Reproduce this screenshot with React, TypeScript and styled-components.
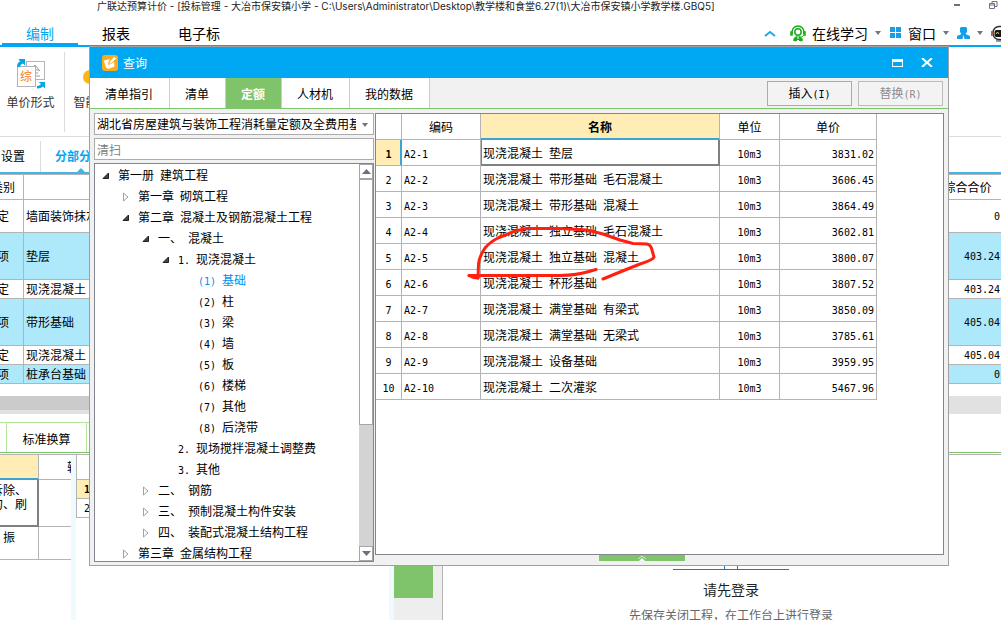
import React from "react";
import styled, { createGlobalStyle, css } from "styled-components";

const BLUE = "#00a8f3";
const GREEN = "#7fc36a";
const PALE_GREEN = "#b2e59c";
const LINE = "#b4b4b4";
const FRAME = "#83868f";
const YELLOW = "#ffedb5";
const SKY = "#aee8fb";
const ACCENT = "#3aa5d5";

const GlobalStyle = createGlobalStyle`
  *, *::before, *::after { box-sizing: border-box; }
  body {
    margin: 0;
    overflow: hidden;
    background: #fff;
    color: #000;
    font-family: "Noto Sans CJK SC", sans-serif;
    font-size: 12px;
    line-height: 14px;
  }
  button, input, select { font: inherit; color: inherit; margin: 0; }
  a { color: inherit; text-decoration: none; }
  svg { display: block; flex: none; }
`;

/* Half-width runs are set in a 6px monospaced face next to 12px Chinese. */
const Half = styled.span`
  font-family: "DejaVu Sans Mono", monospace;
  font-size: 10px;
  white-space: pre;
`;

const Mixed = ({ text }: { text: string }) => (
  <>
    {text
      .split(/([\x20-\x7e]+)/)
      .filter(Boolean)
      .map((run, i) => (/^[\x20-\x7e]/.test(run) ? <Half key={i}>{run}</Half> : <span key={i}>{run}</span>))}
  </>
);

/* ---------- main window ---------- */

const Shell = styled.div`
  position: relative;
  display: flex;
  flex-direction: column;
  height: 100vh;
  overflow: hidden;
  > * { flex-shrink: 0; }
`;

const TitleBar = styled.header`
  display: flex;
  justify-content: space-between;
  height: 16px;
  padding: 0 3px 0 97px;
  font-family: Inter, "Noto Sans CJK SC", sans-serif;
  font-size: 10px;
  line-height: 12px;
  color: #222;
  white-space: nowrap;
`;

const WindowButtons = styled.div`
  display: flex;
  gap: 28px;
`;

const IconButton = styled.button`
  display: flex;
  align-items: center;
  padding: 0;
  border: 0;
  background: none;
`;

const MenuBar = styled.nav`
  display: flex;
  justify-content: space-between;
  height: 31px;
  padding-left: 2px;
  border-bottom: 2px solid ${BLUE};
  font-size: 14px;
  line-height: 20px;
`;

const MenuGroup = styled.div`
  display: flex;
`;

const MenuItem = styled.a<{ $active?: boolean }>`
  padding: 7px 24px 0;
  ${(p) => p.$active && css`color: ${BLUE}; border-bottom: 2px solid ${BLUE};`}
`;

const MenuTools = styled.div`
  display: flex;
  align-items: center;
  gap: 7px;
  padding-top: 5px;
  overflow: hidden;
`;

const Tool = styled.button`
  display: flex;
  align-items: center;
  gap: 6px;
  padding: 0;
  border: 0;
  background: none;
  white-space: nowrap;
`;

const Ribbon = styled.div`
  display: flex;
  gap: 2px;
  height: 90px;
  padding-top: 5px;
  border-bottom: 1px solid #dcdcdc;
`;

const RibbonButton = styled.button`
  display: flex;
  flex-direction: column;
  align-items: center;
  gap: 6px;
  width: 65px;
  height: 80px;
  padding: 5px 3px 0 0;
  border: 0;
  border-right: 1px solid #dcdcdc;
  background: none;
  color: #333;
`;

const ViewTabs = styled.nav`
  display: flex;
  height: 37px;
  padding-top: 4px;
  border-bottom: 2px solid #41b5e4;
`;

const ViewTab = styled.a<{ $active?: boolean }>`
  position: relative;
  width: ${(p) => (p.$active ? 80 : 41)}px;
  padding: 8px 0 0 ${(p) => (p.$active ? 14 : 1)}px;
  white-space: nowrap;
  ${(p) =>
    p.$active
      ? css`
          color: ${BLUE};
          font-weight: 700;
          &::after {
            content: "";
            position: absolute;
            left: 36px;
            bottom: 0;
            border: 4px solid transparent;
            border-top: 0;
            border-bottom-color: #41b5e4;
          }
        `
      : css`border-right: 1px solid #dcdcdc;`}
`;

const BillTable = styled.table`
  width: calc(100% + 17px);
  margin-left: -17px;
  border-spacing: 0;
  border-top: 1px solid ${LINE};
  table-layout: fixed;
`;

const BillCell = styled.td<{ $align?: string }>`
  padding: 0 2px;
  border-right: 1px solid ${LINE};
  border-bottom: 1px solid ${LINE};
  text-align: ${(p) => p.$align ?? "left"};
  font-weight: 400;
  white-space: nowrap;
  &:last-child { border-right: 0; padding-right: 1px; }
`;

const BillRow = styled.tr<{ $h: number; $fill?: boolean }>`
  height: ${(p) => p.$h}px;
  background: ${(p) => (p.$fill ? SKY : "#fff")};
`;

const Scroller = styled.div`
  display: flex;
  height: 18px;
  margin-top: 12px;
  background: #e1e1e1;
  &::before {
    content: "";
    width: 60%;
    height: 14px;
    background: #cbcbcb;
  }
`;

const DetailTabs = styled.nav`
  display: flex;
  height: 31px;
  margin-top: 8px;
  border-bottom: 1px solid ${GREEN};
`;

const DetailTab = styled.a<{ $w: number }>`
  width: ${(p) => p.$w}px;
  padding-top: 9px;
  border-top: 1px solid ${PALE_GREEN};
  border-right: 1px solid ${PALE_GREEN};
  text-align: center;
`;

const Detail = styled.div`
  display: flex;
  flex: 1 1 0;
  min-height: 0;
  margin-top: 1px;
  border-top: 1px solid ${LINE};
`;

const Clip = styled.div<{ $w: number }>`
  width: ${(p) => p.$w}px;
  overflow: hidden;
`;

const Splitter = styled.div`
  width: 5px;
  background: #effaff;
`;

const NoteTable = styled.table`
  width: 240px;
  margin-left: -12px;
  border-spacing: 0;
  table-layout: fixed;
`;

const NoteRow = styled.tr<{ $h: number }>`
  height: ${(p) => p.$h}px;
`;

const NoteCell = styled.td<{ $head?: boolean; $picked?: boolean }>`
  padding: 3px 0 0 3px;
  border-right: 1px solid ${LINE};
  border-bottom: 1px solid ${LINE};
  vertical-align: top;
  text-align: left;
  font-weight: 400;
  &:last-child { padding: 0 0 0 28px; vertical-align: middle; }
  ${(p) => p.$head && css`background: ${YELLOW}; border-bottom: 2px solid ${ACCENT};`}
  ${(p) => p.$picked && css`border-right-color: #808080; border-bottom-color: #808080; box-shadow: inset -1px -1px 0 #808080;`}
`;

const IndexTable = styled.table`
  width: 100%;
  border-spacing: 0;
  border-left: 1px solid ${LINE};
`;

const IndexCell = styled.td<{ $picked?: boolean }>`
  height: 19px;
  padding: 0 0 0 7px;
  border-bottom: 1px solid ${LINE};
  background: ${(p) => (p.$picked ? YELLOW : "#fff")};
  font-weight: ${(p) => (p.$picked ? 700 : 400)};
`;

const SideRail = styled.div`
  width: 49px;
  border-right: 1px solid ${LINE};
  background: #eee;
`;

const RailTab = styled.button`
  display: block;
  width: 39px;
  height: 143px;
  border: 0;
  background: ${GREEN};
`;

const Login = styled.section`
  display: flex;
  flex: 1;
  flex-direction: column;
  align-items: center;
  padding: 96px 0 0 18px;
`;

const LoginTitle = styled.h2`
  margin: 8px 0;
  font-size: 14px;
  font-weight: 400;
  line-height: 20px;
  color: #222;
`;

const LoginHint = styled.p`
  margin: 0;
  line-height: 16px;
  color: #666;
  white-space: nowrap;
`;

/* ---------- query dialog ---------- */

const Dialog = styled.section`
  position: absolute;
  top: 46px;
  right: 52px;
  bottom: 54px;
  left: 89px;
  display: flex;
  flex-direction: column;
  border: 1px solid #a0a0a0;
  background: #f1f1f1;
`;

const DialogTitle = styled.header`
  display: flex;
  align-items: center;
  gap: 5px;
  height: 31px;
  padding: 0 15px 0 12px;
  background: ${BLUE};
  color: #fff;
`;

const DialogControls = styled.div`
  display: flex;
  gap: 18px;
  margin-left: auto;
`;

const DialogBar = styled.div`
  display: flex;
  align-items: center;
  justify-content: space-between;
  height: 31px;
  padding-right: 5px;
  border-bottom: 1px solid ${GREEN};
`;

const Tabs = styled.div`
  display: flex;
  height: 30px;
`;

const Tab = styled.button<{ $active?: boolean }>`
  padding: 2px 16px 0 15px;
  border: 0;
  border-right: 1px solid ${PALE_GREEN};
  background: ${(p) => (p.$active ? GREEN : "#fff")};
  color: ${(p) => (p.$active ? "#fff" : "#000")};
  font-weight: ${(p) => (p.$active ? 700 : 400)};
`;

const Actions = styled.div`
  display: flex;
  gap: 6px;
`;

const Action = styled.button`
  width: 85px;
  height: 25px;
  padding: 2px 0 0;
  border: 1px solid #ababab;
  background: #f3f3f3;
  &:disabled { border-color: #bcbcbc; color: #8c8c8c; }
`;

const DialogBody = styled.div`
  display: flex;
  flex: 1;
  gap: 1px;
  min-height: 0;
  padding: 4px 4px 3px;
`;

const LeftPane = styled.div`
  display: flex;
  flex-direction: column;
  gap: 3px;
  width: 280px;
`;

const SelectWrap = styled.div`
  position: relative;
  display: flex;
`;

const Select = styled.select`
  appearance: none;
  width: 100%;
  height: 22px;
  padding: 0 17px 0 2px;
  border: 1px solid #acacac;
  border-radius: 0;
  background: #fff;
`;

const SelectArrow = styled.span`
  position: absolute;
  right: 5px;
  top: 10px;
  pointer-events: none;
`;

const Search = styled.input`
  width: 100%;
  height: 22px;
  padding: 0 2px;
  border: 1px solid #acacac;
  &::placeholder { color: #808080; opacity: 1; }
`;

const TreeFrame = styled.div`
  display: flex;
  flex: 1;
  min-height: 0;
  border: 1px solid ${FRAME};
  background: #fff;
`;

const Tree = styled.ul`
  flex: 1;
  margin: 0;
  padding: 1px 0 0;
  overflow: hidden;
  list-style: none;
`;

const TreeItem = styled.li<{ $level: number; $picked?: boolean }>`
  display: flex;
  align-items: center;
  height: 21px;
  padding-left: ${(p) => 7 + p.$level * 20}px;
  color: ${(p) => (p.$picked ? "#0090f0" : "#000")};
  white-space: nowrap;
`;

const Twist = styled.span`
  width: 16px;
`;

const ScrollBar = styled.div`
  display: flex;
  flex-direction: column;
  width: 14px;
  background: #d3d3d3;
`;

const ScrollButton = styled.button`
  display: flex;
  align-items: center;
  justify-content: center;
  height: 15px;
  padding: 0;
  border: 1px solid #a6a6a6;
  background: #fff;
`;

const Thumb = styled.div`
  height: 62%;
  border: 1px solid #a6a6a6;
  background: #fff;
`;

const Spacer = styled.div`
  flex: 1;
`;

const RightPane = styled.div`
  display: flex;
  flex: 1;
  flex-direction: column;
  min-width: 0;
`;

const GridFrame = styled.div`
  position: relative;
  flex: 1;
  border: 1px solid ${FRAME};
  background: #fff;
`;

const Grid = styled.table`
  width: 501px;
  border-spacing: 0;
  table-layout: fixed;
`;

const cell = css`
  height: 26px;
  border-right: 1px solid ${LINE};
  border-bottom: 1px solid ${LINE};
  font-weight: 400;
  white-space: nowrap;
`;

const HeadCell = styled.th<{ $active?: boolean }>`
  ${cell}
  padding: 0;
  ${(p) => p.$active && css`
    background: ${YELLOW};
    border-bottom-color: ${ACCENT};
    box-shadow: inset 0 -1px 0 ${ACCENT};
    font-weight: 700;
  `}
`;

const Cell = styled.td<{ $align?: string; $picked?: boolean }>`
  ${cell}
  padding: 2px 2px 0;
  text-align: ${(p) => p.$align ?? "left"};
  ${(p) => p.$picked && css`
    border-color: #808080;
    box-shadow: inset 1px 0 0 #808080, inset -1px -1px 0 #808080;
  `}
`;

const RowHead = styled.th<{ $active?: boolean }>`
  ${cell}
  padding: 2px 0 0;
  ${(p) => p.$active && css`
    background: ${YELLOW};
    border-right-color: ${ACCENT};
    box-shadow: inset -1px 0 0 ${ACCENT};
    font-weight: 700;
  `}
`;

const Ink = styled.svg`
  position: absolute;
  left: 88px;
  top: 110px;
  pointer-events: none;
`;

const Handle = styled.button`
  display: flex;
  justify-content: center;
  align-self: center;
  width: 86px;
  height: 6px;
  margin: 0 36px 1px 0;
  padding: 0;
  border: 0;
  background: ${GREEN};
`;

/* ---------- icons ---------- */

const Caret = () => (
  <svg width="7" height="4" viewBox="0 0 7 4"><path d="M0 0h6L3 4z" fill="#70757f" /></svg>
);

const Opened = () => (
  <svg width="8" height="8" viewBox="0 0 8 8"><path d="M6.500 1v5.500H1z" fill="#444" stroke="#222" /></svg>
);

const Closed = () => (
  <svg width="8" height="10" viewBox="0 0 8 10"><path d="M1.500 1v8L6 5z" fill="#fff" stroke="#a2a2a2" /></svg>
);

const Headset = () => (
  <svg width="16" height="17" viewBox="0 0 16 17" fill="none" stroke="#19ad19">
    <path d="M2 9V7a6 6 0 0 1 12 0v2" strokeWidth="1.500" />
    <path d="M.5 6.500h2v4h-2zM13.500 6.500h2v4h-2z" fill="#19ad19" strokeWidth=".5" />
    <circle cx="8" cy="7" r="3.200" strokeWidth="1.500" />
    <path d="M13.500 10.500c-1 1.500-2 1.500-3 1.500" />
    <path d="M3.500 15.500c.5-3 2-4 4.500-4s4 1 4.500 4l-2.500.5-2-2-2 2z" fill="#19ad19" />
    <path d="M8 11v3" stroke="#fff" />
  </svg>
);

const Robot = () => (
  <svg width="10" height="17" viewBox="0 0 10 17">
    <rect x="2" y="1.500" width="18" height="13" rx="6" fill="#fff" stroke="#333" strokeWidth="1.500" />
    <rect x="3.500" y="5" width="14" height="7" rx="2" fill="#161616" />
    <path d="M5 9l1.500-2L8 9" stroke="#f5d628" fill="none" />
    <path d="M.8 6v5" stroke="#d34b33" strokeWidth="1.500" />
    <path d="M5 16h12" stroke="#333" />
  </svg>
);

const PriceForm = () => (
  <svg width="30" height="32" viewBox="0 0 30 32">
    <rect x="10.500" y="4.500" width="18" height="18" fill="#fff" stroke="#b4b4b4" />
    <path d="M14 14l5-6 5 6M15 13h8M16 16h6M19 11v8M15 19h9" fill="none" stroke="#9a9a9a" />
    <rect x="1.500" y="9.500" width="18" height="20" fill="#fff" stroke="#b4b4b4" />
    <text x="4" y="24" fontSize="12" fill="#f57c14">综</text>
    <path d="M1 10c0-3 1-4.500 3-5.500L2.500 2H9v6.500L7 6.500C5 7.500 4 8.500 4 10z" fill="#00a8e8" />
    <path d="M21 29c2 0 3-1 4-2l-2.500-2H29v6.500L27 29.500c-2 1.500-4 2-6 2z" fill="#00a8e8" />
  </svg>
);

const Pencil = () => (
  <svg width="16" height="16" viewBox="0 0 16 16">
    <rect width="16" height="16" rx="3" fill="#fbab22" />
    <path d="M2 5.500L8 4 6 8l1 1 5-2 .5 4.500L6 14 3.500 12z" fill="#fff" />
    <path d="M6.500 9.500L8 6l4-4.500 2.500 2L10 8z" fill="#fff" stroke="#fbab22" strokeWidth=".8" />
  </svg>
);

/* ---------- data ---------- */

type TreeNode = [level: number, text: string, state?: "open" | "closed"];

const tree: TreeNode[] = [
  [0, "第一册 建筑工程", "open"],
  [1, "第一章 砌筑工程", "closed"],
  [1, "第二章 混凝土及钢筋混凝土工程", "open"],
  [2, "一、 混凝土", "open"],
  [3, "1. 现浇混凝土", "open"],
  [4, "(1) 基础"],
  [4, "(2) 柱"],
  [4, "(3) 梁"],
  [4, "(4) 墙"],
  [4, "(5) 板"],
  [4, "(6) 楼梯"],
  [4, "(7) 其他"],
  [4, "(8) 后浇带"],
  [3, "2. 现场搅拌混凝土调整费"],
  [3, "3. 其他"],
  [2, "二、 钢筋", "closed"],
  [2, "三、 预制混凝土构件安装", "closed"],
  [2, "四、 装配式混凝土结构工程", "closed"],
  [1, "第三章 金属结构工程", "closed"],
];

const quotas: [string, string, string][] = [
  ["A2-1", "现浇混凝土 垫层", "3831.02"],
  ["A2-2", "现浇混凝土 带形基础 毛石混凝土", "3606.45"],
  ["A2-3", "现浇混凝土 带形基础 混凝土", "3864.49"],
  ["A2-4", "现浇混凝土 独立基础 毛石混凝土", "3602.81"],
  ["A2-5", "现浇混凝土 独立基础 混凝土", "3800.07"],
  ["A2-6", "现浇混凝土 杯形基础", "3807.52"],
  ["A2-7", "现浇混凝土 满堂基础 有梁式", "3850.09"],
  ["A2-8", "现浇混凝土 满堂基础 无梁式", "3785.61"],
  ["A2-9", "现浇混凝土 设备基础", "3959.95"],
  ["A2-10", "现浇混凝土 二次灌浆", "5467.96"],
];

const bill: { h: number; kind: string; name: string; sum: string }[] = [
  { h: 33, kind: "定", name: "墙面装饰抹灰", sum: "0" },
  { h: 47, kind: "项", name: "垫层", sum: "403.24" },
  { h: 19, kind: "定", name: "现浇混凝土", sum: "403.24" },
  { h: 47, kind: "项", name: "带形基础", sum: "405.04" },
  { h: 19, kind: "定", name: "现浇混凝土", sum: "405.04" },
  { h: 19, kind: "项", name: "桩承台基础", sum: "0" },
];

const QueryDialog = () => (
  <Dialog role="dialog" aria-label="查询">
    <DialogTitle>
      <Pencil />
      <span>查询</span>
      <DialogControls>
        <IconButton aria-label="最大化">
          <svg width="11" height="8" viewBox="0 0 11 8"><path d="M0 0h11v8H0zM1 3v4h9V3z" fill="#fff" fillRule="evenodd" /></svg>
        </IconButton>
        <IconButton aria-label="关闭">
          <svg width="12" height="9" viewBox="0 0 12 9"><path d="M1 0l10 9M11 0L1 9" stroke="#fff" strokeWidth="2" /></svg>
        </IconButton>
      </DialogControls>
    </DialogTitle>
    <DialogBar>
      <Tabs>
        {["清单指引", "清单", "定额", "人材机", "我的数据"].map((t) => (
          <Tab key={t} $active={t === "定额"}>{t}</Tab>
        ))}
      </Tabs>
      <Actions>
        <Action><Mixed text="插入(I)" /></Action>
        <Action disabled><Mixed text="替换(R)" /></Action>
      </Actions>
    </DialogBar>
    <DialogBody>
      <LeftPane>
        <SelectWrap>
          <Select aria-label="定额库">
            <option>湖北省房屋建筑与装饰工程消耗量定额及全费用基</option>
          </Select>
          <SelectArrow><Caret /></SelectArrow>
        </SelectWrap>
        <Search aria-label="查找" placeholder="清扫" />
        <TreeFrame>
          <Tree>
            {tree.map(([level, text, state]) => (
              <TreeItem key={text} $level={level} $picked={text === "(1) 基础"}>
                <Twist>{state === "open" ? <Opened /> : state === "closed" ? <Closed /> : null}</Twist>
                <span><Mixed text={text} /></span>
              </TreeItem>
            ))}
          </Tree>
          <ScrollBar>
            <ScrollButton aria-label="向上">
              <svg width="9" height="5" viewBox="0 0 9 5"><path d="M0 5h9L4.500 0z" fill="#6c7082" /></svg>
            </ScrollButton>
            <Thumb />
            <Spacer />
            <ScrollButton aria-label="向下">
              <svg width="9" height="5" viewBox="0 0 9 5"><path d="M0 0h9L4.500 5z" fill="#6c7082" /></svg>
            </ScrollButton>
          </ScrollBar>
        </TreeFrame>
      </LeftPane>
      <RightPane>
        <GridFrame>
          <Grid>
            <colgroup>
              <col width="26" /><col width="79" /><col width="239" /><col width="60" /><col width="97" />
            </colgroup>
            <thead>
              <tr>
                <HeadCell />
                <HeadCell>编码</HeadCell>
                <HeadCell $active>名称</HeadCell>
                <HeadCell>单位</HeadCell>
                <HeadCell>单价</HeadCell>
              </tr>
            </thead>
            <tbody>
              {quotas.map(([code, name, price], i) => (
                <tr key={code}>
                  <RowHead $active={i === 0}><Mixed text={String(i + 1)} /></RowHead>
                  <Cell><Mixed text={code} /></Cell>
                  <Cell $picked={i === 0}><Mixed text={name} /></Cell>
                  <Cell $align="center"><Mixed text="10m3" /></Cell>
                  <Cell $align="right"><Mixed text={price} /></Cell>
                </tr>
              ))}
            </tbody>
          </Grid>
          <Ink width="196" height="60" viewBox="464 224 196 60" fill="none" stroke="#ff2010" strokeWidth="3" strokeLinecap="round" strokeLinejoin="round">
            <path d="M478 278L478.500 264Q479 257 485 248Q490 242 498 238L515 231L527 228.500H560L587 230L603 234L620 240L633 243.500L647 244Q651 245 652 250L654 257Q653 260 640 264L620 272L603 279" />
            <path d="M469 275.500H560Q578 275 587 272L596 269.500" />
            <path d="M469 275.500Q473 278 478 278V275.500z" fill="#ff2010" />
          </Ink>
        </GridFrame>
        <Handle aria-label="展开">
          <svg width="10" height="6" viewBox="0 0 10 6"><path d="M1 4l4-3 4 3" fill="none" stroke="#d8efd0" /><path d="M2 6l3-3 3 3z" fill="#fff" /></svg>
        </Handle>
      </RightPane>
    </DialogBody>
  </Dialog>
);

export default function App() {
  return (
    <Shell>
      <GlobalStyle />
      <TitleBar>
        <span>{"广联达预算计价 - [投标管理 - 大冶市保安镇小学 - C:\\Users\\Administrator\\Desktop\\教学楼和食堂6.27(1)\\大冶市保安镇小学教学楼.GBQ5]"}</span>
        <WindowButtons>
          <IconButton aria-label="最小化">
            <svg width="7" height="8" viewBox="0 0 7 8"><path d="M0 0h6v2H0z" fill="#6c7082" /></svg>
          </IconButton>
          <IconButton aria-label="还原">
            <svg width="9" height="16" viewBox="0 0 9 16"><path d="M.5 3.500h5v5h-5zM.5 5h5M3 3V1.500h5v5H6" fill="none" stroke="#6c7082" /></svg>
          </IconButton>
        </WindowButtons>
      </TitleBar>
      <MenuBar>
        <MenuGroup>
          <MenuItem href="#" $active>编制</MenuItem>
          <MenuItem href="#">报表</MenuItem>
          <MenuItem href="#">电子标</MenuItem>
        </MenuGroup>
        <MenuTools>
          <IconButton aria-label="收起">
            <svg width="12" height="7" viewBox="0 0 12 7"><path d="M1 6l5-4 5 4" fill="none" stroke="#1ea7ea" strokeWidth="2" /></svg>
          </IconButton>
          <Spacer />
          <Tool><Headset />在线学习</Tool>
          <Caret />
          <Tool>
            <svg width="13" height="12" viewBox="0 0 13 12"><path d="M1 0h5v5H1zM7 0h5v5H7zM1 6h5v5H1zM7 6h5v5H7z" fill="#159fe6" /></svg>
            窗口
          </Tool>
          <Caret />
          <IconButton aria-label="账号">
            <svg width="13" height="12" viewBox="0 0 13 12"><path d="M4 0h5l1 1v4L8.500 7l4.500 2v3H7.500L6.500 8l-1 4H0V9l4.500-2L3 5V1z" fill="#159fe6" /></svg>
          </IconButton>
          <Caret />
          <Robot />
        </MenuTools>
      </MenuBar>
      <Ribbon>
        <RibbonButton><PriceForm />单价形式</RibbonButton>
        <RibbonButton>
          <svg width="30" height="32" viewBox="0 0 30 32"><circle cx="7" cy="20" r="7" fill="#fdb515" /></svg>
          智能组价
        </RibbonButton>
      </Ribbon>
      <ViewTabs>
        <ViewTab href="#">设置</ViewTab>
        <ViewTab href="#" $active>分部分项</ViewTab>
      </ViewTabs>
      <BillTable>
        <colgroup><col width="41" /><col /><col width="68" /></colgroup>
        <thead>
          <BillRow $h={25}>
            <BillCell as="th" $align="center">类别</BillCell>
            <BillCell as="th" />
            <BillCell as="th" $align="center">综合合价</BillCell>
          </BillRow>
        </thead>
        <tbody>
          {bill.map((r, i) => (
            <BillRow key={i} $h={r.h} $fill={r.kind === "项"}>
              <BillCell $align="center">{r.kind}</BillCell>
              <BillCell>{r.name}</BillCell>
              <BillCell $align="right"><Mixed text={r.sum} /></BillCell>
            </BillRow>
          ))}
        </tbody>
      </BillTable>
      <Scroller />
      <DetailTabs>
        <DetailTab href="#" $w={7} aria-label="工料机显示" />
        <DetailTab href="#" $w={80}>标准换算</DetailTab>
        <DetailTab href="#" $w={80} aria-label="换算信息" />
      </DetailTabs>
      <Detail>
        <Clip $w={71}>
          <NoteTable>
            <colgroup><col width="51" /><col /></colgroup>
            <tbody>
              <NoteRow $h={25}><NoteCell $head /><NoteCell>转换</NoteCell></NoteRow>
              <NoteRow $h={47}><NoteCell $picked>拆除、<br />勾、刷</NoteCell><NoteCell /></NoteRow>
              <NoteRow $h={33}><NoteCell>、振</NoteCell><NoteCell /></NoteRow>
            </tbody>
          </NoteTable>
        </Clip>
        <Splitter />
        <Clip $w={313}>
          <IndexTable>
            <tbody>
              <NoteRow $h={25}><IndexCell /></NoteRow>
              <tr><IndexCell $picked><Mixed text="1" /></IndexCell></tr>
              <tr><IndexCell><Mixed text="2" /></IndexCell></tr>
            </tbody>
          </IndexTable>
        </Clip>
        <Splitter />
        <SideRail><RailTab aria-label="侧栏" /></SideRail>
        <Login>
          <svg width="116" height="20" viewBox="0 0 116 20"><path d="M0 18.500h116M51.500 0v18M64.500 0v18" stroke="#1a78be" /></svg>
          <LoginTitle>请先登录</LoginTitle>
          <LoginHint>先保存关闭工程，在工作台上进行登录</LoginHint>
        </Login>
      </Detail>
      <QueryDialog />
    </Shell>
  );
}
